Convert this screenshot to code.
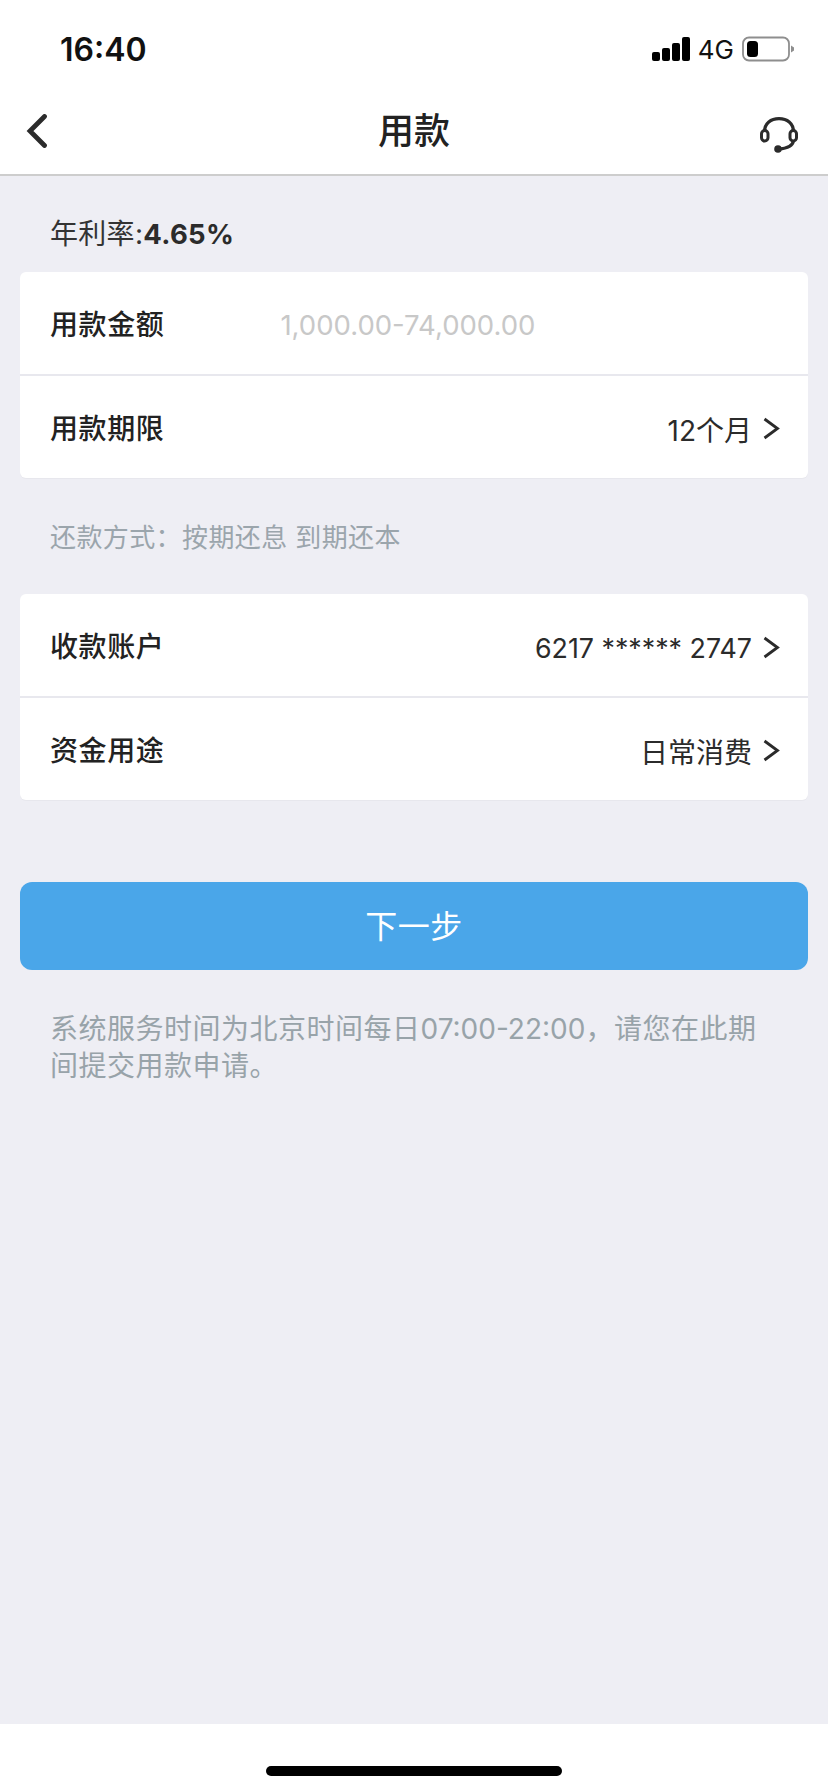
<div class="page">
  <div class="status">
    <span class="time">16:40</span>
    <div class="status-right">
      <div class="signal"><i class="b1"></i><i class="b2"></i><i class="b3"></i><i class="b4"></i></div>
      <span class="net">4G</span>
      <svg class="battery" width="52" height="26" viewBox="0 0 52 26" aria-hidden="true">
        <rect x="1" y="1.5" width="46" height="23" rx="6" fill="none" stroke="#8e8e8e" stroke-width="1.8"/>
        <rect x="5" y="5" width="11" height="16" rx="3.5" fill="#000"/>
        <path d="M49 9.5 L52 11.5 V14.5 L49 16.5 Z" fill="#8e8e8e"/>
      </svg>
    </div>
  </div>

  <header class="nav">
    <svg class="back" width="22" height="34" viewBox="0 0 22 34" aria-hidden="true">
      <path d="M18.5 2.5 L4 17 L18.5 31.5" fill="none" stroke="#2b2b2b" stroke-width="4.8" stroke-linecap="round" stroke-linejoin="miter"/>
    </svg>
    <h1>用款</h1>
    <svg class="service" width="38" height="36" viewBox="0 0 38 36" aria-hidden="true">
      <path d="M4.5 15 C4.5 6 11 1.7 19 1.7 C27 1.7 33.5 6 33.5 15" fill="none" stroke="#2b2b2b" stroke-width="3.2"/>
      <rect x="1.5" y="13.5" width="6.5" height="10.5" rx="3.2" fill="none" stroke="#2b2b2b" stroke-width="3"/>
      <rect x="30" y="13.5" width="6.5" height="10.5" rx="3.2" fill="none" stroke="#2b2b2b" stroke-width="3"/>
      <path d="M33.5 24 C32.5 29 27 31.5 19 32" fill="none" stroke="#2b2b2b" stroke-width="3.2"/>
      <circle cx="18" cy="32" r="3.8" fill="#2b2b2b"/>
    </svg>
  </header>

  <main class="content">
    <p class="rate">年利率:<b>4.65%</b></p>

    <section class="card">
      <div class="row">
        <span class="label">用款金额</span>
        <span class="placeholder">1,000.00-74,000.00</span>
      </div>
      <div class="row">
        <span class="label">用款期限</span>
        <span class="value">12个月<svg class="chev" width="18" height="24" viewBox="0 0 18 24" aria-hidden="true"><path d="M2.5 2 L15.5 11.5 L2.5 21" fill="none" stroke="#2b2b2b" stroke-width="2.8"/></svg></span>
      </div>
    </section>

    <p class="method">还款方式：按期还息 到期还本</p>

    <section class="card">
      <div class="row">
        <span class="label">收款账户</span>
        <span class="value account">6217 ****** 2747<svg class="chev" width="18" height="24" viewBox="0 0 18 24" aria-hidden="true"><path d="M2.5 2 L15.5 11.5 L2.5 21" fill="none" stroke="#2b2b2b" stroke-width="2.8"/></svg></span>
      </div>
      <div class="row">
        <span class="label">资金用途</span>
        <span class="value">日常消费<svg class="chev" width="18" height="24" viewBox="0 0 18 24" aria-hidden="true"><path d="M2.5 2 L15.5 11.5 L2.5 21" fill="none" stroke="#2b2b2b" stroke-width="2.8"/></svg></span>
      </div>
    </section>

    <button class="next">下一步</button>

    <p class="note">系统服务时间为北京时间每日<span class="latin">07:00-22:00</span>，请您在此期<br />间提交用款申请。</p>
  </main>

  <footer class="home"><span class="bar"></span></footer>
</div>

<style>
  :global(body) {
    margin: 0;
    background: #eeeef4;
  }
  .page {
    width: 828px;
    height: 1792px;
    display: flex;
    flex-direction: column;
    background: #eeeef4;
    font-family: Inter, "Noto Sans CJK SC", sans-serif;
    color: #222;
    overflow: hidden;
  }
  .status {
    height: 88px;
    flex: none;
    box-sizing: border-box;
    background: #fff;
    display: flex;
    justify-content: space-between;
    align-items: center;
    padding: 10px 34px 0 60px;
  }
  .time {
    font-size: 32px;
    font-weight: 600;
    color: #111;
  }
  .status-right {
    display: flex;
    align-items: center;
    gap: 8px;
  }
  .signal {
    display: flex;
    align-items: flex-end;
    gap: 2px;
    height: 24px;
  }
  .signal i {
    display: block;
    width: 8px;
    background: #000;
    border-radius: 2px;
  }
  .b1 { height: 9px; }
  .b2 { height: 13px; }
  .b3 { height: 18px; }
  .b4 { height: 24px; }
  .net {
    font-size: 26px;
    color: #111;
  }
  .nav {
    height: 88px;
    flex: none;
    box-sizing: border-box;
    background: #fff;
    border-bottom: 2px solid #cdcdcd;
    display: flex;
    justify-content: space-between;
    align-items: center;
    padding: 0 30px 6px 26px;
    position: relative;
  }
  .back { margin-top: 6px; }
  .service { margin-top: 13px; }
  h1 {
    margin: 0;
    font-size: 36px;
    font-weight: 500;
    color: #222;
    position: absolute;
    left: 0;
    right: 0;
    text-align: center;
    pointer-events: none;
  }
  .content {
    flex: 1;
    padding: 0 20px;
    min-height: 0;
  }
  .rate {
    margin: 0;
    height: 96px;
    box-sizing: border-box;
    padding: 37px 0 0 30px;
    font-size: 28px;
    line-height: 42px;
    color: #333;
    letter-spacing: 0.3px;
  }
  .rate b {
    font-weight: 700;
    font-size: 27.5px;
    color: #2b2b2b;
  }
  .card {
    background: #fff;
    border-radius: 6px;
    box-shadow: 0 1px 1px rgba(0,0,0,0.03);
  }
  .row {
    height: 102px;
    box-sizing: border-box;
    display: flex;
    align-items: center;
    justify-content: space-between;
    padding: 0 28px 0 30px;
    position: relative;
  }
  .row + .row {
    height: 104px;
    border-top: 2px solid #e8e8ee;
  }
  .label {
    font-size: 28px;
    font-weight: 500;
    color: #222;
    letter-spacing: 0.6px;
  }
  .placeholder {
    font-size: 27.5px;
    color: #c8c8c8;
    flex: 1;
    margin: 4px 0 0 116px;
  }
  .value {
    display: flex;
    align-items: center;
    gap: 10px;
    font-size: 28px;
    color: #2b2b2b;
    margin-top: 4px;
  }
  .account {
    font-size: 26.8px;
    margin-top: 5px;
  }
  .method {
    margin: 0;
    height: 116px;
    box-sizing: border-box;
    padding: 0 0 2px 30px;
    display: flex;
    align-items: center;
    font-size: 26px;
    color: #9ba5ac;
    letter-spacing: 0.4px;
  }
  .next {
    display: block;
    width: 100%;
    height: 88px;
    margin-top: 82px;
    padding: 0 0 4px;
    border: 0;
    border-radius: 12px;
    background: #4aa6e9;
    color: #fff;
    font: inherit;
    font-size: 32px;
    letter-spacing: 0.5px;
  }
  .note {
    margin: 0;
    padding: 41px 30px 0 30px;
    font-size: 28px;
    line-height: 37px;
    color: #98a3a9;
    letter-spacing: 0.5px;
  }
  .latin { letter-spacing: 0; }
  .home {
    height: 68px;
    flex: none;
    background: #fff;
    position: relative;
  }
  .bar {
    display: block;
    position: absolute;
    left: 266px;
    top: 42px;
    width: 296px;
    height: 10px;
    border-radius: 5px;
    background: #000;
  }
</style>
